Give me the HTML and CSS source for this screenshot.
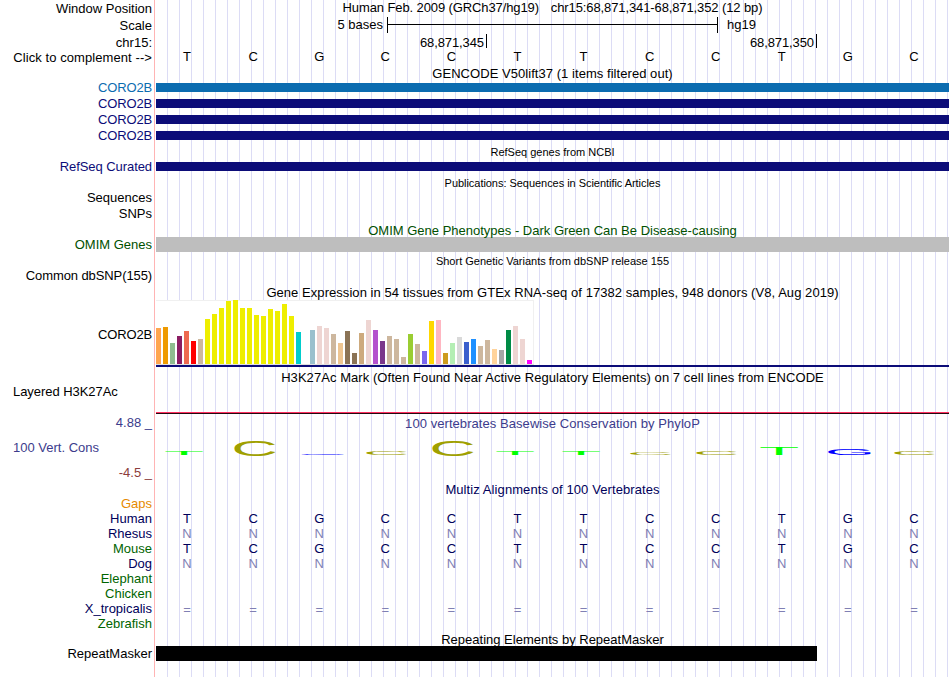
FILE: index.html
```html
<!DOCTYPE html>
<html lang="en">
<head>
<meta charset="utf-8">
<title>Genome Browser</title>
<link rel="stylesheet" href="styles.css">
</head>
<body>
<main class="browser">
  <section class="row ruler">
    <div class="labels"><p class="tall">Window Position</p><p class="tall">Scale</p><p>chr15:</p><p class="complement">Click to complement --&gt;</p></div>
    <div class="track">
      <h2 class="title position"><span class="asm">Human Feb. 2009 (GRCh37/hg19)</span><span class="pos">chr15:68,871,341-68,871,352 (12 bp)</span></h2>
      <div class="scale"><span class="scale-text">5 bases</span><span class="scale-bar"></span><span>hg19</span></div>
      <div class="coords"><span class="coord">68,871,345</span><span class="coord">68,871,350</span></div>
      <div class="bases"><b>T</b><b>C</b><b>G</b><b>C</b><b>C</b><b>T</b><b>T</b><b>C</b><b>C</b><b>T</b><b>G</b><b>C</b></div>
    </div>
  </section>

  <section class="row gencode">
    <div class="labels navy"><p class="blue">CORO2B</p><p>CORO2B</p><p>CORO2B</p><p>CORO2B</p></div>
    <div class="track">
      <h2 class="title t-gencode">GENCODE V50lift37 (1 items filtered out)</h2>
      <div class="genes"><i class="gene gene-blue"></i><i class="gene"></i><i class="gene"></i><i class="gene"></i></div>
    </div>
  </section>

  <section class="row refseq">
    <div class="labels navy"><p>RefSeq Curated</p></div>
    <div class="track"><h2 class="title small">RefSeq genes from NCBI</h2><div class="genes"><i class="gene"></i></div></div>
  </section>

  <section class="row pubs">
    <div class="labels"><p>Sequences</p><p>SNPs</p></div>
    <div class="track"><h2 class="title small t-pubs">Publications: Sequences in Scientific Articles</h2></div>
  </section>

  <section class="row omim">
    <div class="labels green"><p>OMIM Genes</p></div>
    <div class="track"><h2 class="title green">OMIM Gene Phenotypes - Dark Green Can Be Disease-causing</h2><div class="block grey"></div></div>
  </section>

  <section class="row dbsnp">
    <div class="labels"><p>Common dbSNP(155)</p></div>
    <div class="track"><h2 class="title small">Short Genetic Variants from dbSNP release 155</h2></div>
  </section>

  <section class="row gtex">
    <div class="labels"><p>CORO2B</p></div>
    <div class="track">
      <h2 class="title t-gtex">Gene Expression in 54 tissues from GTEx RNA-seq of 17382 samples, 948 donors (V8, Aug 2019)</h2>
      <div class="plot" id="plot"></div>
      <div class="gene-line"></div>
    </div>
  </section>

  <section class="row h3k">
    <div class="labels left"><p>Layered H3K27Ac</p></div>
    <div class="track"><h2 class="title t-h3k">H3K27Ac Mark (Often Found Near Active Regulatory Elements) on 7 cell lines from ENCODE</h2><div class="signal"></div></div>
  </section>

  <section class="row phylop">
    <div class="labels"><p class="max">4.88 _</p><p class="name">100 Vert. Cons</p><p class="min">-4.5 _</p></div>
    <div class="track">
      <h2 class="title t-phylop">100 vertebrates Basewise Conservation by PhyloP</h2>
      <svg class="logo" width="793" height="51" viewBox="156 431 793 51">
        <g class="base-t">
          <text transform="translate(164 455) scale(.66 .058)">T</text>
          <text transform="translate(495 455) scale(.66 .058)">T</text>
          <text transform="translate(561 455) scale(.66 .058)">T</text>
          <text transform="translate(759 455) scale(.66 .116)">T</text>
        </g>
        <g class="base-c">
          <text transform="translate(231.2 455.7) scale(.645 .213)">C</text>
          <text transform="translate(363 455) scale(.64 .058)">C</text>
          <text transform="translate(429.2 455.7) scale(.645 .213)">C</text>
          <text transform="translate(627 455) scale(.64 .044)">C</text>
          <text transform="translate(693 455) scale(.64 .058)">C</text>
          <text transform="translate(891 455) scale(.64 .058)">C</text>
        </g>
        <g class="base-g">
          <text transform="translate(298 455) scale(.64 .015)">G</text>
          <text transform="translate(825 455) scale(.645 .082)">G</text>
        </g>
      </svg>
    </div>
  </section>

  <section class="row multiz">
    <div class="labels dark"><p class="orange">Gaps</p><p>Human</p><p>Rhesus</p><p class="green2">Mouse</p><p>Dog</p><p class="green2">Elephant</p><p class="green2">Chicken</p><p>X_tropicalis</p><p class="green2">Zebrafish</p></div>
    <div class="track dark">
      <h2 class="title t-multiz">Multiz Alignments of 100 Vertebrates</h2>
      <div class="alignment">
        <div class="bases"><b>T</b><b>C</b><b>G</b><b>C</b><b>C</b><b>T</b><b>T</b><b>C</b><b>C</b><b>T</b><b>G</b><b>C</b></div>
        <div class="bases faint"><b>N</b><b>N</b><b>N</b><b>N</b><b>N</b><b>N</b><b>N</b><b>N</b><b>N</b><b>N</b><b>N</b><b>N</b></div>
        <div class="bases"><b>T</b><b>C</b><b>G</b><b>C</b><b>C</b><b>T</b><b>T</b><b>C</b><b>C</b><b>T</b><b>G</b><b>C</b></div>
        <div class="bases faint"><b>N</b><b>N</b><b>N</b><b>N</b><b>N</b><b>N</b><b>N</b><b>N</b><b>N</b><b>N</b><b>N</b><b>N</b></div>
        <div class="bases"></div>
        <div class="bases"></div>
        <div class="bases faint gap"><b>=</b><b>=</b><b>=</b><b>=</b><b>=</b><b>=</b><b>=</b><b>=</b><b>=</b><b>=</b><b>=</b><b>=</b></div>
      </div>
    </div>
  </section>

  <section class="row rmsk">
    <div class="labels"><p>RepeatMasker</p></div>
    <div class="track"><h2 class="title">Repeating Elements by RepeatMasker</h2><div class="block repeat"></div></div>
  </section>
</main>
<script src="app.js"></script>
</body>
</html>
```
FILE: styles.css
```css
* { box-sizing: border-box; margin: 0; padding: 0; }
body {
  width: 950px;
  height: 677px;
  overflow: hidden;
  background: #fff;
  color: #000;
  font: 13px/15px "Liberation Sans", Arial, sans-serif;
}
.browser {
  width: 949px;
  height: 677px;
  background:
    linear-gradient(#ffb4b4, #ffb4b4) 154px 0 / 1px 100% no-repeat,
    repeating-linear-gradient(to right, transparent 0 11px, #dcdcf5 11px 12px) 156px 0 / 793px 100% no-repeat;
}
.row { display: grid; grid-template-columns: 152px 793px; column-gap: 4px; }
.labels { padding-top: 14px; text-align: right; white-space: pre; }
.track { min-width: 0; }
.title { height: 14px; font-size: 13px; font-weight: normal; line-height: 15px; text-align: center; white-space: pre; }
.title.small { height: 12px; font-size: 11px; line-height: 12px; }
.navy { color: #0c0c78; }
.blue { color: #0c6cb0; }
.green { color: #005000; }
.green2 { color: #006400; }
.orange { color: #e68a00; }
.dark { color: #00005a; }

.ruler { height: 66px; }
.ruler .labels { padding-top: 1px; }
.ruler .tall { height: 17px; }
.complement { letter-spacing: 0.08px; }
.position { height: 17px; display: flex; justify-content: center; gap: 12px; letter-spacing: -0.11px; }
.scale { display: flex; height: 17px; }
.scale-text { width: 227px; margin-right: 4px; text-align: right; }
.scale-bar {
  width: 331px;
  height: 16px;
  margin-right: 9px;
  border: solid #000;
  border-width: 0 1px;
  background: linear-gradient(#000, #000) 0 7px / 100% 1px no-repeat;
}
.coords { display: flex; height: 15px; letter-spacing: -0.1px; }
.coord { width: 330px; height: 14px; padding-right: 2px; border-right: 1px solid #000; line-height: 17px; text-align: right; }
.coord:first-child { width: 331px; }
.bases { display: grid; grid-template-columns: repeat(12, 1fr); height: 15px; margin: 0 2px 0 -2px; text-align: center; }
.bases b { font-weight: normal; }

.gencode { height: 80px; }
.gencode .labels { line-height: 16px; padding-top: 14px; }
.gencode .labels, .gtex .labels { letter-spacing: -0.15px; }
.t-gencode { letter-spacing: 0.05px; }
.genes { display: grid; gap: 7px; padding-top: 3px; }
.gene { height: 9px; background: #0c0c78; }
.gene-blue { background: #0c6cb0; }

.refseq { height: 31px; }
.refseq .labels, .pubs .labels, .dbsnp .labels { padding-top: 13px; }
.refseq .labels { letter-spacing: -0.07px; }
.refseq .genes { padding-top: 4px; }
.pubs { height: 46px; }
.pubs p + p { margin-top: 1px; }
.t-pubs { letter-spacing: -0.04px; }
.omim { height: 32px; }
.block { height: 15px; }
.grey { background: #bebebe; }
.dbsnp { height: 30px; }
.dbsnp .labels { letter-spacing: -0.1px; }

.gtex { height: 85px; }
.gtex .labels { padding-top: 42px; }
.gtex .title { height: 15px; letter-spacing: 0.055px; }
.plot {
  display: flex;
  align-items: flex-end;
  gap: 2px;
  width: 378px;
  height: 65px;
  background: linear-gradient(#f0f0f0, #f0f0f0) 0 0 / 100% 1px no-repeat, linear-gradient(#f0f0f0, #f0f0f0) 100% 0 / 1px 100% no-repeat, #fff;
  border-bottom: 1px solid #e0e0e0;
}
.bar { width: 5px; }
.gene-line { height: 2px; background: #0c0c78; }

.h3k { height: 45px; }
.t-h3k { letter-spacing: 0.06px; }
.left { padding-left: 13px; text-align: left; letter-spacing: -0.05px; }
.signal { height: 2px; margin-top: 28px; background: linear-gradient(#ff3060 50%, #280810 50%); }

.phylop { height: 67px; }
.phylop .labels { padding-top: 0; }
.phylop p { height: 25px; }
.phylop .title { height: 16px; padding-top: 1px; letter-spacing: 0.06px; }
.max, .name, .t-phylop { color: #3c3c8c; }
.min { color: #8c3c3c; }
.name { padding-left: 13px; text-align: left; }
.logo { display: block; font: 100px "Liberation Sans", Arial, sans-serif; }
.base-t { fill: #0f0; }
.base-c { fill: #a0a000; }
.base-g { fill: #00f; }

.multiz { height: 150px; }
.t-multiz { letter-spacing: 0.09px; }
.alignment { padding-top: 15px; }
.faint { color: #8080b4; }
.gap { padding-top: 1px; }
.rmsk { height: 45px; }
.repeat { width: 661px; background: #000; }
```
FILE: app.js
```js
const tissues = [
  [36, "#ffa54f"], [37, "#ee9a00"], [21, "#8fbc8f"], [28, "#8b1c62"], [33, "#ee6a50"], [23, "#ff0000"], [25, "#cdb79e"],
  [45, "#eeee00"], [50, "#eeee00"], [56, "#eeee00"], [63, "#eeee00"], [64, "#eeee00"], [56, "#eeee00"], [56, "#eeee00"],
  [49, "#eeee00"], [48, "#eeee00"], [55, "#eeee00"], [53, "#eeee00"], [60, "#eeee00"], [48, "#eeee00"], [32, "#00cdcd"],
  [0, "#ffffff"], [34, "#9ac0cd"], [38, "#eed5d2"], [36, "#eed5d2"], [30, "#cdb79e"], [21, "#eec591"], [33, "#8b7355"],
  [11, "#8b7355"], [31, "#cdaa7d"], [44, "#eed5d2"], [34, "#b452cd"], [23, "#7a378b"], [28, "#cdb79e"], [25, "#cdb79e"],
  [7, "#cdb79e"], [30, "#9acd32"], [20, "#cdb79e"], [13, "#7a67ee"], [43, "#ffd700"], [44, "#ffb6c1"], [11, "#cd9b1d"],
  [21, "#b4eeb4"], [27, "#d9d9d9"], [22, "#3a5fcd"], [25, "#1e90ff"], [18, "#cdb79e"], [24, "#cdb79e"], [15, "#ffd39b"],
  [14, "#a6a6a6"], [34, "#008b45"], [38, "#eed5d2"], [25, "#eed5d2"], [4, "#ff00ff"]
];
const plot = document.getElementById("plot");
for (const [height, color] of tissues) {
  const bar = document.createElement("i");
  bar.className = "bar";
  bar.style.height = height + "px";
  bar.style.background = color;
  plot.append(bar);
}
```
